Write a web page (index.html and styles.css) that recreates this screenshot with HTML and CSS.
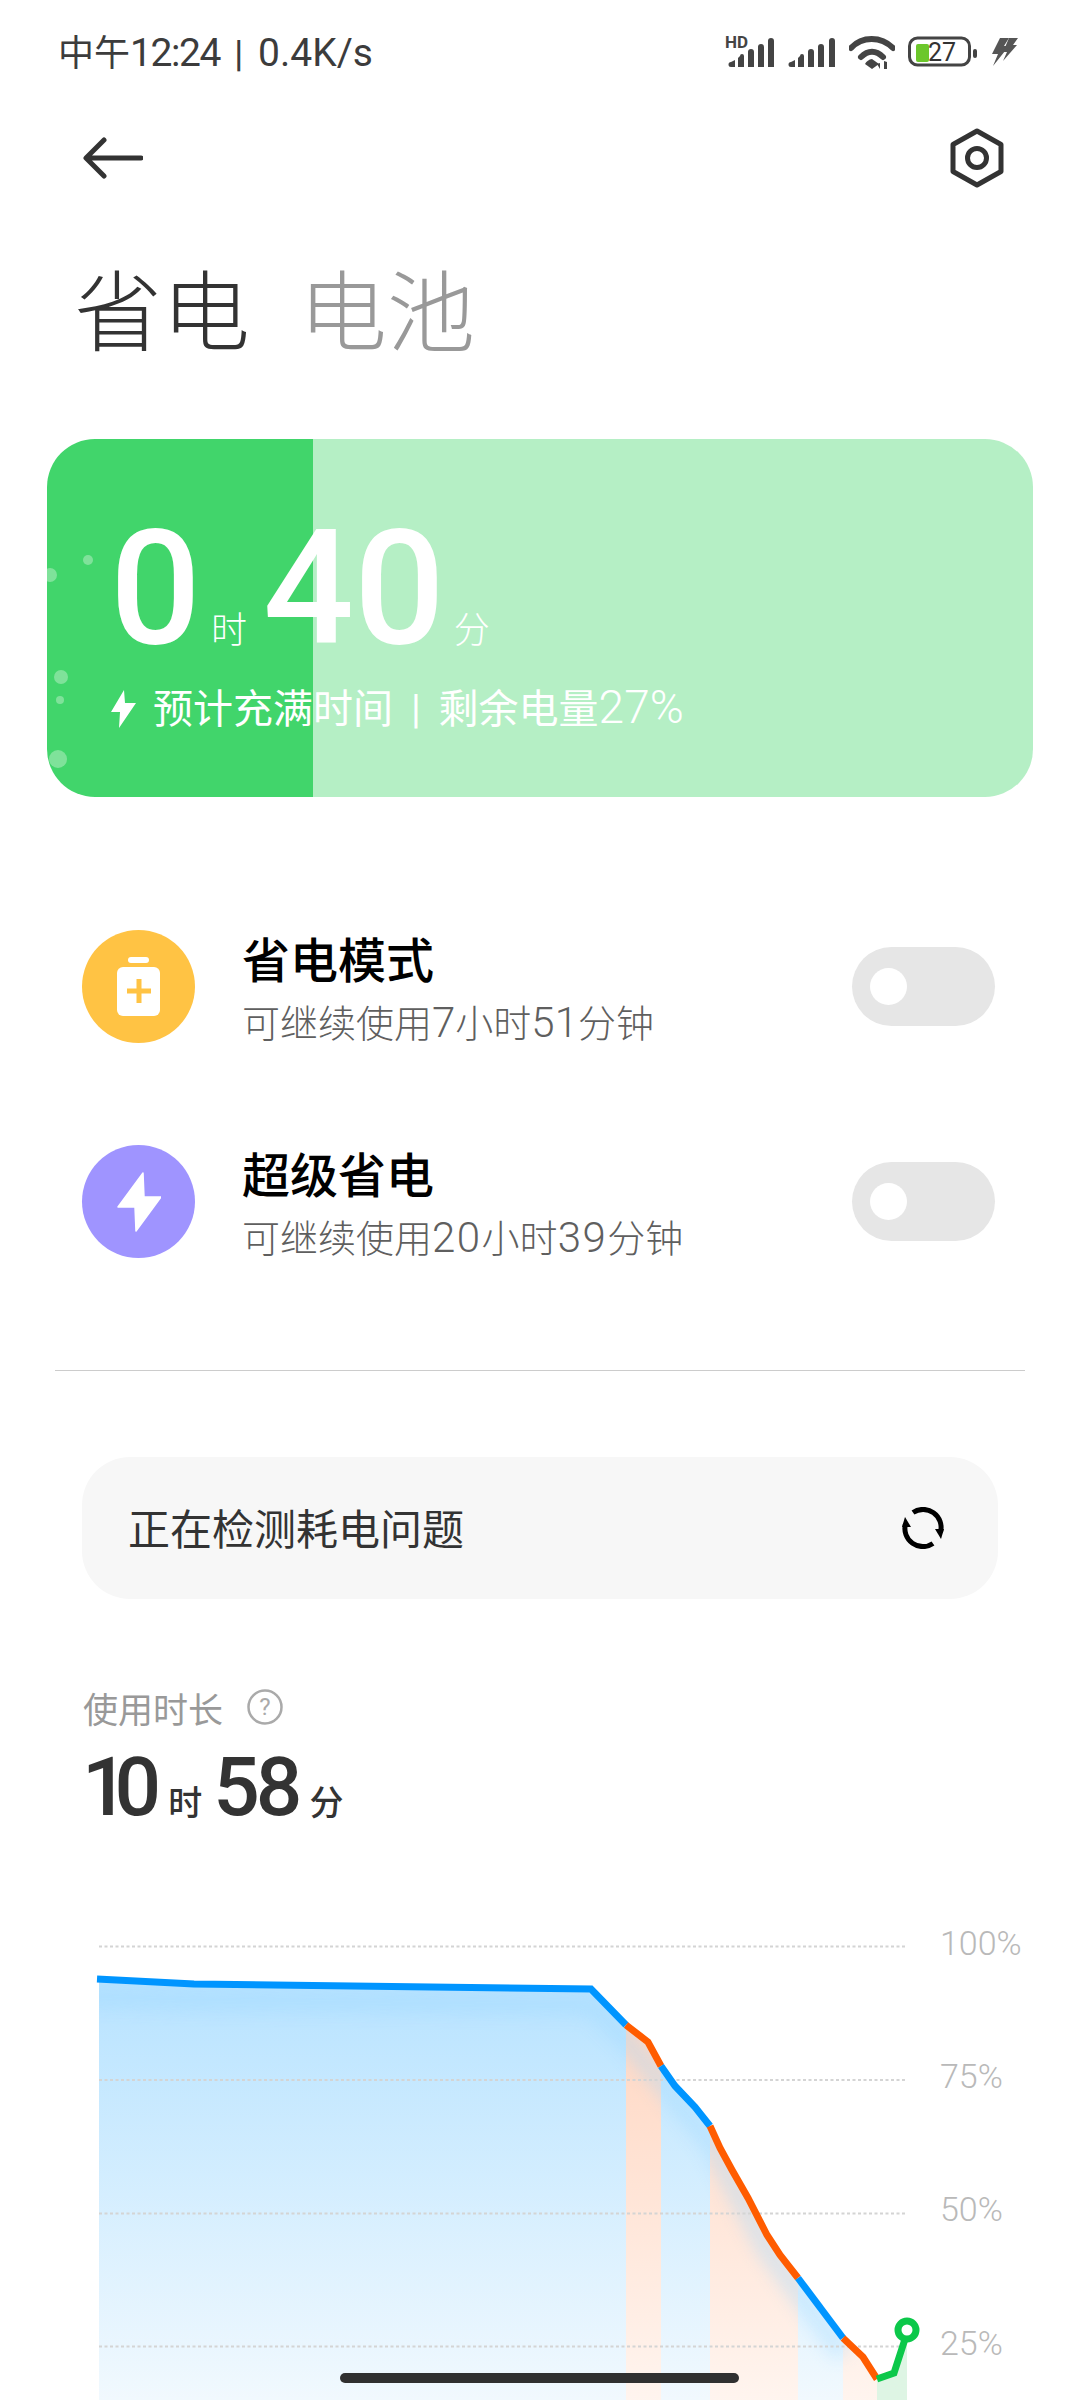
FILE: index.html
```html
<!DOCTYPE html>
<html lang="zh-CN">
<head>
    <meta charset="UTF-8">
    <meta name="viewport" content="width=device-width, initial-scale=1.0">
    <title>省电</title>
    <link rel="stylesheet" href="styles.css">
</head>
<body>
    <!-- status bar -->
    <div class="status">
        <span class="status-text">中午<span class="clock">12:24</span><span class="sep">|</span><span class="speed">0.4K/s</span></span>
        <div class="status-icons">
            <svg width="50" height="40" viewBox="0 -4 50 40">
                <text x="0" y="12" class="hd">HD</text>
                <path class="ico" d="M3 26l4-2v7H3a2 2 0 0 1 0-5zM12 20a2 2 0 0 1 4 0v11h-6V22zM20 16a3 3 0 0 1 6 0v15h-6zM30 11a3 3 0 0 1 6 0v20h-6zM40 5a3 3 0 0 1 6 0v26h-6z" transform="translate(3 0)"/>
            </svg>
            <svg width="48" height="32" viewBox="0 0 48 32">
                <path class="ico" d="M3 26l4-2v7H3a2 2 0 0 1 0-5zM12 20a2 2 0 0 1 4 0v11h-6V22zM20 16a3 3 0 0 1 6 0v15h-6zM30 11a3 3 0 0 1 6 0v20h-6zM41 5a3 3 0 0 1 6 0v26h-6z"/>
            </svg>
            <svg width="46" height="34" viewBox="0 0 46 34">
                <path class="wifi" d="M2 13C13 1 32 1 44 13"/>
                <path class="wifi" d="M12 22c7-7 15-7 22 0"/>
                <path class="ico" d="M23 24l7 5-7 5-7-5a10 10 0 0 1 7-5z"/>
                <path class="ico" d="M31 34v-6l-3 1zM35 26v8h3v-7z"/>
            </svg>
            <svg class="batt" width="70" height="32" viewBox="0 0 70 32">
                <rect x="1.500" y="2" width="60" height="27" rx="8" class="batt-body"/>
                <rect x="8" y="8" width="13" height="18" rx="2" class="batt-fill"/>
                <rect x="65" y="13" width="4" height="9" rx="2" class="ico"/>
                <text x="20" y="25" class="batt-num">27</text>
            </svg>
            <svg width="27" height="30" viewBox="0 0 27 30">
                <path class="charge" d="M9 1h9l-5 8h5L2 29l5-12H1z"/>
                <path class="charge" d="M18 1h9l-5 7h4L12 24l4-9h-4z"/>
            </svg>
        </div>
    </div>

    <!-- back + settings -->
    <div class="nav">
        <svg width="60" height="42" viewBox="0 0 60 42">
            <path class="nav-line" d="M58 21H4M21 3L3 21l18 18"/>
        </svg>
        <svg width="56" height="60" viewBox="0 0 56 60">
            <path class="nav-line" d="M28 3l24 13.500v27L28 57 4 43.500v-27z"/>
            <circle cx="28" cy="30" r="9.500" class="nav-line"/>
        </svg>
    </div>

    <div class="title">
        <span>省电</span>
        <span class="title-off">电池</span>
    </div>

    <!-- charge card -->
    <div class="card">
        <i class="bubble b1"></i>
        <i class="bubble b2"></i>
        <i class="bubble b3"></i>
        <i class="bubble b4"></i>
        <i class="bubble b5"></i>
        <div class="card-time">
            <b>0</b><span class="unit-h">时</span><b>40</b><span class="unit-m">分</span>
        </div>
        <div class="card-sub">
            <svg width="25" height="38" viewBox="0 0 25 38">
                <path d="M13 0L0 22h9l-1 16 17-25H14z" fill="#fff"/>
            </svg>
            <span>预计充满时间 | 剩余电量<span class="card-pct">27%</span></span>
        </div>
    </div>

    <!-- modes -->
    <div class="row">
        <div class="round yellow">
            <svg width="44" height="60" viewBox="0 0 44 60">
                <rect x="11" y="0" width="21" height="6" rx="3" fill="#fff"/>
                <rect x="0" y="10" width="43" height="49" rx="6" fill="#fff"/>
                <path d="M22 22v24M10 34h24" stroke="#ffc344" stroke-width="5" fill="none"/>
            </svg>
        </div>
        <div class="row-text">
            <div class="row-title">省电模式</div>
            <div class="row-sub">可继续使用<span class="n">7</span>小时<span class="n">51</span>分钟</div>
        </div>
        <div class="toggle"><i></i></div>
    </div>
    <div class="row">
        <div class="round purple">
            <svg width="44" height="60" viewBox="0 0 44 60">
                <path d="M26 1L1 35h17l1 24 25-34H27z" fill="#fff" stroke="#fff" stroke-width="1.500" stroke-linejoin="round"/>
            </svg>
        </div>
        <div class="row-text">
            <div class="row-title">超级省电</div>
            <div class="row-sub">可继续使用<span class="n n2">20</span>小时<span class="n n2">39</span>分钟</div>
        </div>
        <div class="toggle"><i></i></div>
    </div>

    <div class="line"></div>

    <div class="check">
        <span class="check-text">正在检测耗电问题</span>
        <svg width="42" height="42" viewBox="0 0 42 42">
            <g id="half">
                <path d="M11 5.500A18 18 0 0 1 38.500 25" fill="none" stroke="#000" stroke-width="5"/>
                <path d="M33 22l9 0-3 10z" fill="#000"/>
            </g>
            <use href="#half" transform="rotate(180 21 21)"/>
        </svg>
    </div>

    <!-- usage -->
    <div class="usage">
        <div class="usage-label">
            <span>使用时长</span>
            <svg width="36" height="36" viewBox="0 0 36 36">
                <circle cx="18" cy="18" r="16.500" fill="none" stroke="#aaa" stroke-width="2.500"/>
                <text x="18" y="26" class="help">?</text>
            </svg>
        </div>
        <div class="usage-time">
            <b><span class="one">1</span>0</b><span class="u1">时</span><b>58</b><span class="u2">分</span>
        </div>
    </div>

    <!-- viewBox uses page coordinates -->
    <svg class="chart" width="1080" height="500" viewBox="0 1900 1080 500">
        <defs>
            <linearGradient id="gBlue" gradientUnits="userSpaceOnUse" x1="0" y1="1985" x2="0" y2="2420">
                <stop offset="0" stop-color="#b8e3ff"/>
                <stop offset="1" stop-color="#f4fafe"/>
            </linearGradient>
            <linearGradient id="gOrange" gradientUnits="userSpaceOnUse" x1="0" y1="2030" x2="0" y2="2420">
                <stop offset="0" stop-color="#ffd8c4"/>
                <stop offset="1" stop-color="#fff6f1"/>
            </linearGradient>
            <clipPath id="under">
                <path d="M99 1979L194 1984L591 1989L626 2025L648 2042L661 2066L675 2086L695 2107L710 2126L720 2148L732 2170L748 2198L767 2235L780 2255L798 2278L843 2338L863 2357L877 2379L894 2373L907 2330V2400H99z"/>
            </clipPath>
            <filter id="soft" x="-10%" y="-20%" width="120%" height="140%">
                <feGaussianBlur stdDeviation="9"/>
            </filter>
        </defs>
        <g clip-path="url(#under)">
            <rect x="99" y="1960" width="527" height="440" fill="url(#gBlue)"/>
            <rect x="626" y="1960" width="35" height="440" fill="url(#gOrange)"/>
            <rect x="661" y="1960" width="49" height="440" fill="url(#gBlue)"/>
            <rect x="710" y="1960" width="88" height="440" fill="url(#gOrange)"/>
            <rect x="798" y="1960" width="45" height="440" fill="url(#gBlue)"/>
            <rect x="843" y="1960" width="34" height="440" fill="url(#gOrange)"/>
            <rect x="877" y="1960" width="30" height="440" fill="#def5e4"/>
            <path class="glow" filter="url(#soft)" d="M60 1996L194 2000L591 2005L626 2040L661 2082L710 2142L767 2250L843 2354"/>
        </g>

        <path class="grid" d="M99 1946.500H907M99 2080H907M99 2213.500H907M99 2346.500H907"/>

        <path class="trace blue" d="M97 1979L194 1984L591 1989L626 2025"/>
        <path class="trace orange" d="M626 2025L648 2042L661 2066"/>
        <path class="trace blue" d="M661 2066L675 2086L695 2107L710 2126"/>
        <path class="trace orange" d="M710 2126L720 2148L732 2170L748 2198L767 2235L780 2255L798 2278"/>
        <path class="trace blue" d="M798 2278L843 2338"/>
        <path class="trace orange" d="M843 2338L863 2357L877 2379"/>
        <path class="trace green" d="M877 2379L894 2373L906 2336"/>
        <circle class="end" cx="907" cy="2330" r="9"/>

        <text x="940" y="1955" class="pct">100%</text>
        <text x="940" y="2088" class="pct">75%</text>
        <text x="940" y="2221" class="pct">50%</text>
        <text x="940" y="2355" class="pct">25%</text>
    </svg>

    <div class="home-bar"></div>
</body>
</html>
```

FILE: styles.css
```css
*{
    margin: 0;
    padding: 0;
    box-sizing: border-box;
}
body{
    width: 1080px;
    height: 2400px;
    overflow: hidden;
    position: relative;
    background: #fff;
    font-family: "Roboto", "Noto Sans CJK SC", sans-serif;
    color: #333;
}

/* status bar */
.status{
    height: 104px;
    padding: 0 62px 0 58px;
    display: flex;
    align-items: center;
    justify-content: space-between;
}
.status-text{
    margin-top: -4px;
    font-size: 36px;
    color: #3c3c3c;
}
.clock{
    font-size: 39px;
    letter-spacing: -1.400px;
}
.sep{
    margin: 0 15px 0 14px;
    font-size: 36px;
    font-weight: 500;
}
.speed{
    font-size: 39px;
}
.status-icons{
    display: flex;
    align-items: center;
    gap: 13px;
}
.ico{
    fill: #444;
}
.hd{
    font: bold 17px "Roboto", sans-serif;
    fill: #444;
}
.wifi{
    fill: none;
    stroke: #444;
    stroke-width: 6;
    stroke-linecap: round;
}
.batt-body{
    fill: none;
    stroke: #444;
    stroke-width: 3;
}
.batt-fill{
    fill: #6cc72b;
}
.batt-num{
    font: 25px "Roboto", sans-serif;
    fill: #333;
}
.charge{
    fill: #555;
}

/* nav */
.nav{
    height: 108px;
    padding: 0 75px 0 83px;
    display: flex;
    align-items: center;
    justify-content: space-between;
}
.nav-line{
    fill: none;
    stroke: #333;
    stroke-width: 5;
    stroke-linecap: round;
    stroke-linejoin: round;
}

.title{
    margin-top: 42px;
    padding-left: 74px;
    display: flex;
    gap: 49px;
    font-size: 88px;
    line-height: 120px;
    font-weight: 300;
}
.title-off{
    color: #999;
}

/* charge card */
.card{
    position: relative;
    overflow: hidden;
    margin: 65px 47px 0 47px;
    height: 358px;
    border-radius: 48px;
    padding: 60px 0 0 63px;
    background: linear-gradient(to right, #41d56b 266px, #b5efc5 266px);
    color: #fff;
}
.bubble{
    position: absolute;
    border-radius: 50%;
    background: #7fe29a;
}
.b1{ left: 36px; top: 116px; width: 10px; height: 10px; }
.b2{ left: -4px; top: 129px; width: 14px; height: 14px; }
.b3{ left: 7px; top: 231px; width: 14px; height: 14px; }
.b4{ left: 9px; top: 257px; width: 8px; height: 8px; }
.b5{ left: 2px; top: 311px; width: 18px; height: 18px; }
.card-time{
    display: flex;
    align-items: baseline;
    height: 180px;
    line-height: 180px;
}
.card-time b{
    font-size: 160px;
    font-weight: 500;
}
.unit-h{
    font-size: 36px;
    margin: 0 16px 0 10px;
    font-weight: 300;
}
.unit-m{
    font-size: 36px;
    margin-left: 9px;
    font-weight: 300;
}
.card-sub{
    margin: 4px 0 0 1px;
    display: flex;
    align-items: center;
    gap: 17px;
    font-size: 40px;
    line-height: 48px;
    font-weight: 400;
    word-spacing: 8px;
}
.card-pct{
    font-size: 46px;
    font-weight: 300;
}

/* modes */
.row{
    height: 215px;
    padding: 0 85px 0 82px;
    display: flex;
    align-items: center;
}
.card + .row{
    margin-top: 82px;
}
.round{
    width: 113px;
    height: 113px;
    border-radius: 50%;
    display: flex;
    align-items: center;
    justify-content: center;
}
.yellow{
    background: #ffc344;
}
.purple{
    background: #9f94ff;
}
.row-text{
    flex: 1;
    margin-left: 47px;
    padding-top: 8px;
}
.row-title{
    font-size: 48px;
    line-height: 60px;
    font-weight: 500;
    color: #000;
}
.row-sub{
    margin-top: 6px;
    font-size: 38px;
    line-height: 50px;
    font-weight: 300;
    color: #5f5f5f;
}
.n{
    font-size: 42px;
}
.n2{
    letter-spacing: 1.500px;
}
.toggle{
    width: 143px;
    height: 79px;
    border-radius: 40px;
    padding: 21px 0 0 18px;
    background: #e6e6e6;
}
.toggle i{
    display: block;
    width: 37px;
    height: 37px;
    border-radius: 50%;
    background: #fff;
}

.line{
    margin: 61px 55px 0 55px;
    height: 1px;
    background: #ccc;
}

.check{
    margin: 86px 82px 0 82px;
    height: 142px;
    border-radius: 48px;
    padding: 0 54px 0 46px;
    display: flex;
    align-items: center;
    justify-content: space-between;
    background: #f7f7f7;
    font-size: 42px;
}
.check-text{
    margin-bottom: 3px;
}

/* usage */
.usage{
    margin-top: 88px;
    padding-left: 82px;
}
.usage-label{
    display: flex;
    align-items: center;
    gap: 24px;
    height: 40px;
    padding-left: 1px;
    font-size: 35px;
    color: #999;
}
.help{
    font: 24px "Roboto", sans-serif;
    text-anchor: middle;
    fill: #aaa;
}
.usage-time{
    margin-top: 10px;
    display: flex;
    align-items: baseline;
    height: 100px;
    line-height: 100px;
}
.usage-time b{
    font-size: 82px;
    font-weight: 500;
    letter-spacing: -4px;
}
.usage-time .one{
    letter-spacing: -14px;
}
.u1{
    font-size: 34px;
    font-weight: 500;
    margin: 0 11px 0 11px;
}
.u2{
    font-size: 34px;
    font-weight: 500;
    margin-left: 11px;
}

/* chart */
.chart{
    position: absolute;
    left: 0;
    bottom: 0;
}
.grid{
    fill: none;
    stroke: #d4d4d4;
    stroke-width: 2;
    stroke-dasharray: 3 2.500;
}
.glow{
    fill: none;
    stroke: #9bd8ff;
    stroke-width: 16;
    opacity: 0.45;
}
.trace{
    fill: none;
    stroke-width: 7;
}
.blue{
    stroke: #0095ff;
}
.orange{
    stroke: #ff5c00;
}
.green{
    stroke: #0cc84a;
}
.end{
    fill: #fff;
    stroke: #0cc84a;
    stroke-width: 7;
}
.pct{
    font: 300 34px "Roboto", sans-serif;
    fill: #b9b9b9;
}

.home-bar{
    position: absolute;
    left: 340px;
    top: 2373px;
    width: 399px;
    height: 10px;
    border-radius: 5px;
    background: #303030;
}
```
